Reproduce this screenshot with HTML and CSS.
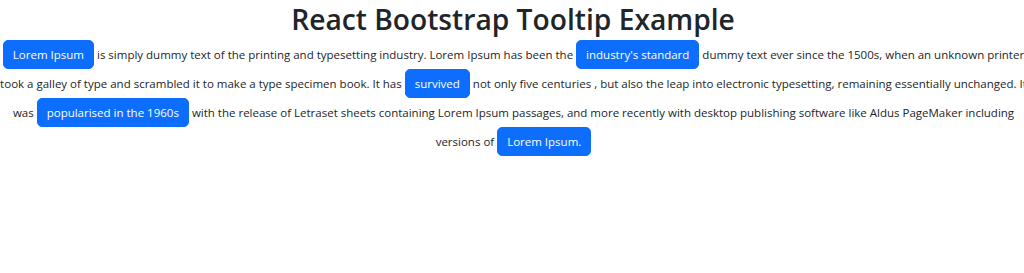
FILE: index.html
```html
<!DOCTYPE html>
<html lang="en">
<head>
<meta charset="utf-8">
<title>React Bootstrap Tooltip Example</title>
<link rel="stylesheet" href="styles.css">
</head>
<body>
<div class="app">
  <h1 class="title">React Bootstrap Tooltip Example</h1>
  <p class="text">
    <button class="btn">Lorem Ipsum</button> is simply dummy text of the printing and typesetting industry. Lorem Ipsum has been the <button class="btn">industry's standard</button> dummy text ever since the 1500s, when an unknown printer took a galley of type and scrambled it to make a type specimen book. It has <button class="btn">survived</button> not only five centuries , but also the leap into electronic typesetting, remaining essentially unchanged. It was <button class="btn">popularised in the 1960s</button> with the release of Letraset sheets containing Lorem Ipsum passages, and more recently with desktop publishing software like Aldus PageMaker including versions of <button class="btn">Lorem Ipsum.</button>
  </p>
</div>
</body>
</html>
```
FILE: styles.css
```css
* { box-sizing: border-box; }
html, body { margin: 0; padding: 0; background: #fff; }
body {
  font-family: "Open Sans", "Noto Sans", sans-serif;
  color: #212529;
  font-size: 11.5px;
  line-height: 1.5;
  overflow: hidden;
}
.app { text-align: center; }
.title {
  margin: 0 0 2px;
  font-size: 28.2px;
  font-weight: 600;
  line-height: 38px;
  color: #212529;
  padding-left: 2px;
}
.text {
  margin: 0 -8px 0 -5px;
  line-height: 29px;
}
.btn {
  display: inline-block;
  font-family: inherit;
  font-size: 11.5px;
  line-height: 19px;
  color: #fff;
  background: #0d6efd;
  border: 1px solid #0d6efd;
  border-radius: 5px;
  padding: 4px 9px;
  vertical-align: baseline;
  cursor: pointer;
}
```
